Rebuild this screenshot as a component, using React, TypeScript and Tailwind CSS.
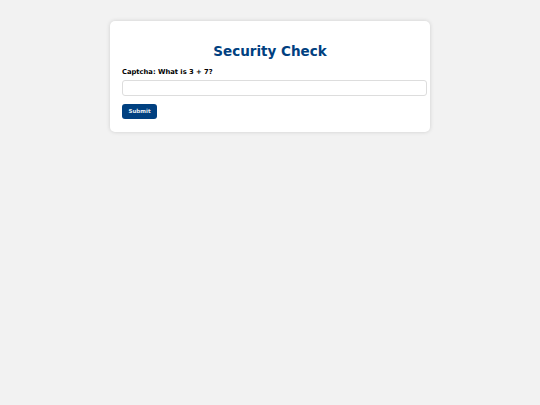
export default function App() {
  return (
    <div className="min-h-[405px] bg-[#f2f2f2] pt-[21px] font-['DejaVu_Sans',sans-serif]">
      <div className="mx-auto w-[320px] rounded-[5px] bg-white px-3 pt-[22px] pb-[13px] shadow-[0_0_4px_rgba(0,0,0,0.15)]">
        <h2 className="text-center text-[13.5px] font-bold leading-[16px] text-[#004080]">Security Check</h2>
        <form onSubmit={(e) => e.preventDefault()} className="mt-[9px]">
          <label className="block text-[6.75px] font-bold leading-[8px] text-black">Captcha: What is 3 + 7?</label>
          <input
            type="text"
            className="mt-[4px] box-content block h-[14px] w-[295px] rounded-[3px] border border-[#ddd] px-1 outline-none"
          />
          <button
            type="submit"
            className="mt-[8px] block h-[15px] w-[35px] rounded-[3px] bg-[#004080] font-['DejaVu_Sans',sans-serif] text-[5.5px] font-semibold text-[#e8eef5]"
          >
            Submit
          </button>
        </form>
      </div>
    </div>
  )
}
